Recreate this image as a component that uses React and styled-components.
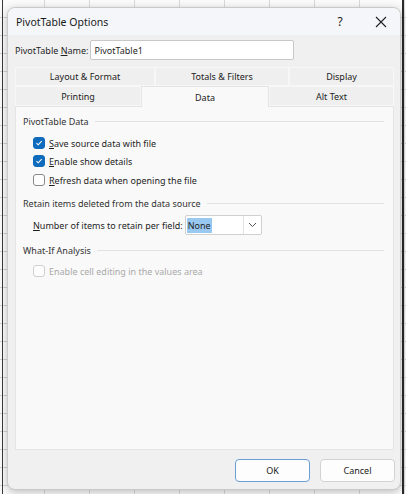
import React from 'react';
import styled, { createGlobalStyle } from 'styled-components';

const GlobalStyle = createGlobalStyle`
    html, body {
        margin: 0;
        padding: 0;
        width: 406px;
        height: 494px;
        overflow: hidden;
    }
    body {
        font-family: "Noto Sans", "Open Sans", sans-serif;
        font-size: 9px;
        color: #1f1f1f;
    }
`;

const Backdrop = styled.div`
    width: 406px;
    height: 494px;
    box-sizing: border-box;
    padding: 7px 5px 4px 7px;
    background-color: #fbfbfb;
    background-image:
        linear-gradient(to right, transparent 2px, #3a3a3a 2px, #3a3a3a 3px, transparent 3px),
        linear-gradient(to left, transparent 2px, #2b2b2b 2px, #2b2b2b 4px, transparent 4px),
        repeating-linear-gradient(to bottom, transparent 0, transparent 17px, #d4d4d4 17px, #d4d4d4 18px),
        repeating-linear-gradient(to right, transparent 0, transparent 44px, #dadada 44px, #dadada 45px);
`;

const Dialog = styled.div`
    width: 394px;
    height: 483px;
    box-sizing: border-box;
    display: flex;
    flex-direction: column;
    background: #f0f0f0;
    border: 1px solid #c9c9c9;
    border-radius: 8px;
    overflow: hidden;
    box-shadow: 0 2px 8px rgba(0, 0, 0, 0.25);
`;

const TitleBar = styled.div`
    height: 27px;
    display: flex;
    align-items: center;
    padding-left: 8px;
    background: #f4f6f9;
`;

const Title = styled.div`
    flex: 1;
    font-size: 10.5px;
    color: #1a1a1a;
`;

const TitleButton = styled.div`
    width: ${p => p.$w}px;
    height: 27px;
    display: flex;
    align-items: center;
    justify-content: center;
    font-size: 12px;
    color: #222;
`;

const Body = styled.div`
    flex: 1;
    display: flex;
    flex-direction: column;
    padding: 5px 5px 0 7px;
`;

const NameRow = styled.div`
    display: flex;
    align-items: center;
    height: 20px;
    gap: 2px;
`;

const NameInput = styled.div`
    width: 204px;
    height: 20px;
    box-sizing: border-box;
    padding: 0 3px;
    display: flex;
    align-items: center;
    background: #fff;
    border: 1px solid #c8c8c8;
    border-radius: 2px;
`;

const Tabs = styled.div`
    margin-top: 7px;
    width: 379px;
`;

const TabRow = styled.div`
    display: grid;
    grid-template-columns: ${p => p.$cols};
    height: ${p => p.$h}px;
`;

const Tab = styled.div`
    display: flex;
    align-items: center;
    justify-content: center;
    box-sizing: border-box;
    background: ${p => (p.$active ? '#f9f9f9' : '#efefef')};
    border: 1px solid ${p => (p.$active ? '#e4e4e4' : '#f7f7f7')};
    border-bottom: ${p => (p.$active ? 'none' : '1px solid #f7f7f7')};
    color: #222;
    margin-bottom: ${p => (p.$active ? '-1px' : '0')};
    position: relative;
    z-index: ${p => (p.$active ? 1 : 0)};
`;

const Panel = styled.div`
    width: 379px;
    height: 344px;
    box-sizing: border-box;
    background: #f9f9f9;
    border: 1px solid #e4e4e4;
    padding: 7px 9px 0 7px;
`;

const GroupHeader = styled.div`
    display: flex;
    align-items: center;
    height: 14px;
    margin-top: ${p => p.$top || 0}px;
    color: #333;
    gap: 6px;

    &::after {
        content: '';
        flex: 1;
        height: 1px;
        background: #e2e2e2;
    }
`;

const Row = styled.div`
    display: flex;
    align-items: center;
    height: ${p => p.$h || 18}px;
    margin-top: ${p => p.$top || 0}px;
    padding-left: 10px;
    gap: ${p => p.$gap || 2}px;
    color: ${p => (p.$disabled ? '#a9a9a9' : '#1f1f1f')};
`;

const Box = styled.span`
    width: 12px;
    height: 12px;
    box-sizing: border-box;
    border-radius: 3px;
    display: flex;
    align-items: center;
    justify-content: center;
    background: ${p => (p.$checked ? '#0f6cbd' : '#fdfdfd')};
    border: 1px solid ${p => (p.$checked ? '#0f6cbd' : p.$disabled ? '#d0d0d0' : '#8a8a8a')};
`;

const Key = styled.span`
    text-decoration: underline;
    text-underline-offset: 1px;
`;

const Select = styled.div`
    width: 77px;
    height: 20px;
    box-sizing: border-box;
    display: flex;
    background: #fff;
    border: 1px solid #d0d0d0;
    border-radius: 2px;
`;

const SelectValue = styled.div`
    flex: 1;
    display: flex;
    align-items: center;
    padding-left: 1px;

    span {
        background: #99c8f0;
        padding: 1px 1px;
        line-height: 13px;
    }
`;

const SelectArrow = styled.div`
    width: 17px;
    display: flex;
    align-items: center;
    justify-content: center;
    border-left: 1px solid #e2e2e2;
`;

const Footer = styled.div`
    display: flex;
    justify-content: flex-end;
    gap: 10px;
    padding: 9px 0 0 0;
`;

const Button = styled.div`
    width: 75px;
    height: 23px;
    box-sizing: border-box;
    display: flex;
    align-items: center;
    justify-content: center;
    background: #fdfdfd;
    border: 1px solid ${p => (p.$primary ? '#6a9fd6' : '#d2d2d2')};
    border-radius: 4px;
    color: #222;
`;

function Check({ checked, disabled }) {
    return (
        <Box $checked={checked} $disabled={disabled}>
            {checked && (
                <svg width="8" height="8" viewBox="0 0 10 10">
                    <path d="M1.8 5.2 L4 7.3 L8.3 2.6" fill="none" stroke="#fff" strokeWidth="1.3" />
                </svg>
            )}
        </Box>
    );
}

function App() {
    return (
        <>
            <GlobalStyle />
            <Backdrop>
                <Dialog>
                    <TitleBar>
                        <Title>PivotTable Options</Title>
                        <TitleButton $w={44}>?</TitleButton>
                        <TitleButton $w={38}>
                            <svg width="12" height="12" viewBox="0 0 12 12">
                                <path d="M1 1 L11 11 M11 1 L1 11" stroke="#222" strokeWidth="1.1" />
                            </svg>
                        </TitleButton>
                    </TitleBar>
                    <Body>
                        <NameRow>
                            <span>PivotTable <Key>N</Key>ame:</span>
                            <NameInput>PivotTable1</NameInput>
                        </NameRow>

                        <Tabs>
                            <TabRow $cols="140px 134px 105px" $h={19}>
                                <Tab>Layout &amp; Format</Tab>
                                <Tab>Totals &amp; Filters</Tab>
                                <Tab>Display</Tab>
                            </TabRow>
                            <TabRow $cols="126px 128px 125px" $h={20}>
                                <Tab>Printing</Tab>
                                <Tab $active>Data</Tab>
                                <Tab>Alt Text</Tab>
                            </TabRow>
                        </Tabs>

                        <Panel>
                            <GroupHeader>PivotTable Data</GroupHeader>
                            <Row $top={6} $gap={4}>
                                <Check checked />
                                <span><Key>S</Key>ave source data with file</span>
                            </Row>
                            <Row $gap={4}>
                                <Check checked />
                                <span><Key>E</Key>nable show details</span>
                            </Row>
                            <Row $top={1} $gap={4}>
                                <Check />
                                <span><Key>R</Key>efresh data when opening the file</span>
                            </Row>
                            <GroupHeader $top={7}>Retain items deleted from the data source</GroupHeader>
                            <Row $h={20} $top={5}>
                                <span><Key>N</Key>umber of items to retain per field:</span>
                                <Select>
                                    <SelectValue><span>None</span></SelectValue>
                                    <SelectArrow>
                                        <svg width="9" height="6" viewBox="0 0 9 6">
                                            <path d="M1 1 L4.5 4.5 L8 1" fill="none" stroke="#555" strokeWidth="1" />
                                        </svg>
                                    </SelectArrow>
                                </Select>
                            </Row>
                            <GroupHeader $top={8}>What-If Analysis</GroupHeader>
                            <Row $top={5} $gap={4} $disabled>
                                <Check disabled />
                                <span>Enable cell editing in the values area</span>
                            </Row>
                        </Panel>

                        <Footer>
                            <Button $primary>OK</Button>
                            <Button>Cancel</Button>
                        </Footer>
                    </Body>
                </Dialog>
            </Backdrop>
        </>
    );
}

export default App;
